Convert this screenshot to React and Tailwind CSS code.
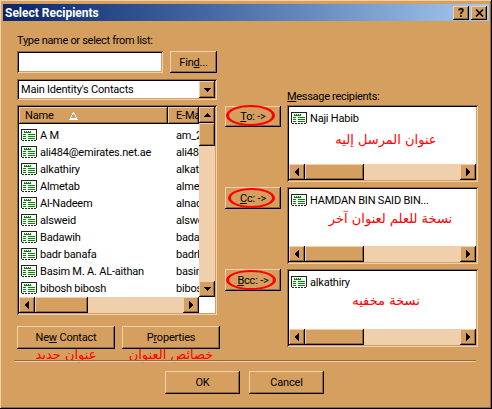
const raised = "bg-[#d59f5f] shadow-[inset_-1px_-1px_0_#000,inset_1px_1px_0_#efcfac,inset_-2px_-2px_0_#8f6a40]"
const sunken = "shadow-[inset_1px_1px_0_#8f6a40,inset_-1px_-1px_0_#efcfac,inset_2px_2px_0_#000,inset_-2px_-2px_0_#d59f5f]"
const arabic = "font-['DejaVu_Sans',sans-serif] text-[#f00] tracking-normal"

const Arrow = ({ dir }) => {
  const points = { up: "1,6 9,6 5,2", down: "1,2 9,2 5,6", left: "6,0 6,9 2,4.5", right: "2,0 2,9 6,4.5" }
  const size = dir === "up" || dir === "down" ? "w-[10px] h-[8px]" : "w-[8px] h-[10px]"
  const box = dir === "up" || dir === "down" ? "0 0 10 8" : "0 0 8 9"
  return (
    <svg className={size} viewBox={box} shapeRendering="crispEdges">
      <polygon points={points[dir]} fill="#000" />
    </svg>
  )
}

const ScrollButton = ({ dir, className = "" }) => (
  <div className={`${raised} shrink-0 flex items-center justify-center ${className}`}>
    <Arrow dir={dir} />
  </div>
)

const HScroll = ({ thumb, className = "" }) => (
  <div className={`flex h-[16px] shrink-0 bg-[#efcfac] ${className}`}>
    <ScrollButton dir="left" className="w-[16px]" />
    <div className={`${raised} ${thumb} shrink-0`} />
    <div className="flex-1" />
    <ScrollButton dir="right" className="w-[16px]" />
  </div>
)

const CardIcon = ({ className = "" }) => (
  <svg className={`w-[16px] h-[13px] shrink-0 ${className}`} viewBox="0 0 16 13" shapeRendering="crispEdges">
    <path d="M0 0h16v11h-1v1h-2v-1h-1v1h-2v-1H9v1H7v-1H6v1H4v-1H3v1H1v-1H0z" fill="#222" />
    <rect x="1" y="1" width="14" height="10" fill="#fff" />
    <path d="M3 2h1v1h1V2h1v1h1V2h1v1h1V2h1v2H3z" fill="#080" />
    <path d="M2 5h3v1H2zM7 5h7v1H7zM2 7h3v1H2zM7 7h7v1H7zM2 9h3v1H2zM7 9h7v1H7z" fill="#080" />
  </svg>
)

const Button = ({ children, className = "" }) => (
  <button className={`${raised} relative flex items-center justify-center text-[11px] text-black ${className}`}>
    <span className="whitespace-nowrap">{children}</span>
  </button>
)

const contacts = [
  ["A M", "am_2"],
  ["ali484@emirates.net.ae", "ali484"],
  ["alkathiry", "alkath"],
  ["Almetab", "almeta"],
  ["Al-Nadeem", "alnad"],
  ["alsweid", "alswei"],
  ["Badawih", "badaw"],
  ["badr banafa", "badrb"],
  ["Basim M. A. AL-aithan", "basim"],
  ["bibosh bibosh", "bibos"],
]

const ContactList = () => (
  <div className={`${sunken} h-[210px] p-[2px] flex flex-col bg-white`}>
    <div className="flex flex-1 min-h-0">
      <div className="w-[180px] flex flex-col overflow-hidden">
        <div className="flex h-[17px] shrink-0">
          <div className={`${raised} w-[149px] shrink-0 flex items-center pl-[6px] gap-[12px]`}>
            <span>Name</span>
            <svg className="w-[9px] h-[8px] ml-[3px]" viewBox="0 0 9 8" shapeRendering="crispEdges">
              <path d="M4 0h1v1h1v2h1v2h1v2h1v1H0V7h1V5h1V3h1V1h1z" fill="#fff" />
              <path d="M4 2h1v1h1v2h1v1H2V5h1V3h1z" fill="#d59f5f" />
            </svg>
          </div>
          <div className={`${raised} flex-1 pl-[8px] flex items-center overflow-hidden whitespace-nowrap`}>E-Mail</div>
        </div>
        <div className="flex-1 overflow-hidden pt-[3px]">
          {contacts.map(([name, mail]) => (
            <div key={name} className="flex items-center h-[17px] pl-[2px]">
              <CardIcon />
              <span className="w-[139px] shrink-0 pl-[3px] whitespace-nowrap">{name}</span>
              <span className="whitespace-nowrap">{mail}</span>
            </div>
          ))}
        </div>
      </div>
      <div className="w-[16px] flex flex-col bg-[#efcfac]">
        <ScrollButton dir="up" className="h-[16px]" />
        <div className={`${raised} h-[23px] shrink-0`} />
        <div className="flex-1" />
        <ScrollButton dir="down" className="h-[16px]" />
      </div>
    </div>
    <HScroll thumb="w-[53px]" className="w-[180px] mr-auto" />
  </div>
)

const RecipientBox = ({ name, note, noteClass, height }) => (
  <div className={`${sunken} ${height} p-[2px] flex flex-col bg-white`}>
    <div className="flex-1 min-h-0 pt-[3px] pl-[2px]">
      <div className="flex items-center gap-[3px] h-[17px]">
        <CardIcon />
        <span className="whitespace-nowrap">{name}</span>
      </div>
      <div dir="rtl" className={`${arabic} ${noteClass} text-[13px] leading-[18px] text-center`}>{note}</div>
    </div>
    <HScroll thumb="w-[59px]" />
  </div>
)

const AddButton = ({ children, ellipse, className = "" }) => (
  <Button className={`w-[56px] ${className}`}>
    {children}
    <span className={`absolute border-y-2 border-x-[3px] border-[#f00] rounded-[50%] ${ellipse}`} />
  </Button>
)

const App = () => {
  return (
    <div className="w-[492px] h-[409px] overflow-hidden bg-[#d59f5f] flex flex-col px-[3px] pt-[4px] text-[11px] leading-none tracking-[-0.2px] text-black font-['Roboto',sans-serif] shadow-[inset_-1px_-1px_0_#000,inset_1px_1px_0_#efcfac,inset_-2px_-2px_0_#8f6a40]">
      {/* title bar */}
      <div className="h-[17px] shrink-0 flex items-center justify-between px-[2px] bg-linear-to-r from-[#0a246a] to-[#a6caf0]">
        <span className="text-white font-bold text-[12px] tracking-normal">Select Recipients</span>
        <div className="flex gap-[2px]">
          <div className={`${raised} w-[16px] h-[14px] flex items-center justify-center font-bold text-[12px]`}>?</div>
          <div className={`${raised} w-[16px] h-[14px] flex items-center justify-center`}>
            <svg className="w-[9px] h-[8px]" viewBox="0 0 9 8">
              <path d="M1 0.5l7 7M8 0.5l-7 7" stroke="#000" strokeWidth="1.6" fill="none" />
            </svg>
          </div>
        </div>
      </div>

      <div className="flex pl-[14px] pt-[12px] h-[339px] shrink-0">
        {/* left column */}
        <div className="w-[203px] shrink-0 flex flex-col">
          <div className="h-[14px] flex items-center whitespace-pre tracking-[-0.3px]"><span>T<u>y</u>pe name or select from list:</span></div>
          <div className="flex w-[200px] mt-[4px] justify-between">
            <div className={`${sunken} w-[146px] h-[22px] bg-white`} />
            <Button className="w-[47px] h-[22px]">Fin<u>d</u>...</Button>
          </div>
          <div className={`${sunken} w-[200px] h-[21px] mt-[6px] p-[2px] flex items-center bg-white`}>
            <span className="flex-1 pl-[2px]">Main Identity's Contacts</span>
            <ScrollButton dir="down" className="w-[16px] h-[17px]" />
          </div>
          <div className="w-[200px] mt-[5px]">
            <ContactList />
          </div>
          <div className="flex justify-between mt-[11px]">
            <Button className="w-[98px] h-[23px]">Ne<u>w</u> Contact</Button>
            <Button className="w-[98px] h-[23px]">P<u>r</u>operties</Button>
          </div>
          <div className="flex justify-between h-[11px] items-center">
            <div dir="rtl" className={`${arabic} w-[98px] text-[13px] text-center`}>عنوان جديد</div>
            <div dir="rtl" className={`${arabic} w-[98px] text-[13px] text-center whitespace-nowrap`}>خصائص العنوان</div>
          </div>
        </div>

        {/* add buttons */}
        <div className="w-[56px] ml-[5px] shrink-0 flex flex-col pt-[73px]">
          <AddButton className="h-[21px]" ellipse="left-[1px] -top-[1px] w-[49px] h-[21px]"><u>T</u>o: -&gt;</AddButton>
          <AddButton className="h-[22px] mt-[60px]" ellipse="left-[3px] top-[1px] w-[47px] h-[20px]"><u>C</u>c: -&gt;</AddButton>
          <AddButton className="h-[22px] mt-[60px]" ellipse="left-[1px] top-[1px] w-[50px] h-[20px]"><u>B</u>cc: -&gt;</AddButton>
        </div>

        {/* recipients */}
        <div className="w-[191px] ml-[6px] shrink-0 flex flex-col pt-[56px]">
          <div className="h-[14px] flex items-center mb-[2px] tracking-[-0.3px]"><span><u>M</u>essage recipients:</span></div>
          <RecipientBox name="Naji Habib" note="عنوان المرسل إليه" noteClass="pl-[5px] mt-[4px]" height="h-[77px]" />
          <div className="mt-[5px]">
            <RecipientBox name="HAMDAN BIN SAID BIN..." note="نسخة للعلم لعنوان آخر" noteClass="pl-[14px] mt-[1px]" height="h-[77px]" />
          </div>
          <div className="mt-[5px]">
            <RecipientBox name="alkathiry" note="نسخة مخفيه" noteClass="pl-[5px] mt-[1px]" height="h-[78px]" />
          </div>
        </div>
      </div>

      <div className="ml-[11px] w-[462px] h-[2px] shrink-0 bg-[#8f6a40] border-b border-[#efcfac]" />
      <div className="flex gap-[9px] pt-[9px] pl-[162px]">
        <Button className="w-[75px] h-[23px]">OK</Button>
        <Button className="w-[75px] h-[23px]">Cancel</Button>
      </div>
    </div>
  )
}

export default App
